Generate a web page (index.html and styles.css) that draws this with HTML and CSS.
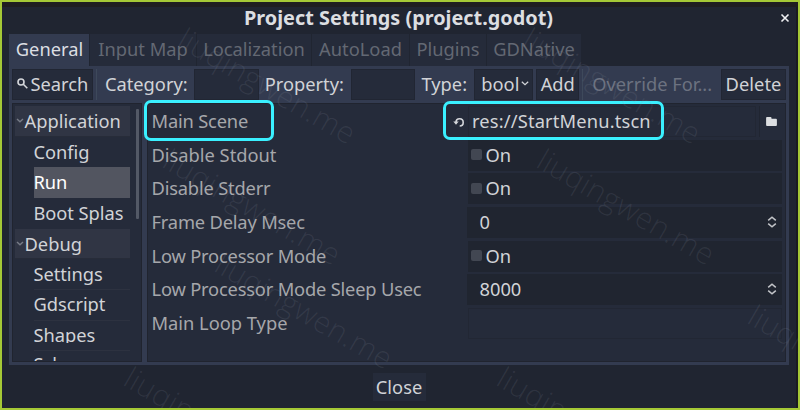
FILE: index.html
```html
<!DOCTYPE html>
<html lang="en">
<head>
<meta charset="utf-8">
<title>Project Settings</title>
<link rel="stylesheet" href="styles.css">
</head>
<body>
<div class="window">
  <header class="title"><h1>Project Settings (project.godot)</h1>
    <svg class="close-x" viewBox="0 0 10 10"><path d="M1.5 1.5l7 7m0-7l-7 7"/></svg>
  </header>
  <nav class="tabs">
    <div class="tab active t1">General</div><div class="tab t2">Input Map</div><div class="tab t3">Localization</div><div class="tab t4">AutoLoad</div><div class="tab t5">Plugins</div><div class="tab t6">GDNative</div>
  </nav>
  <main class="panel">
    <div class="toolbar">
      <div class="btn search"><svg viewBox="0 0 11 11"><circle cx="4" cy="4" r="3"/><path d="M6.3 6.3l4 4"/></svg><span>Search</span></div>
      <i class="sep s1"></i>
      <label class="category">Category:</label><div class="btn input"></div>
      <label class="property">Property:</label><div class="btn input"></div>
      <label class="type">Type:</label>
      <div class="btn bool"><span>bool</span><svg viewBox="0 0 8 5"><path d="M.8.8l3.2 3 3.2-3"/></svg></div>
      <div class="btn add">Add</div>
      <i class="sep s2"></i>
      <span class="override">Override For...</span>
      <div class="btn delete">Delete</div>
    </div>
    <div class="body">
      <aside class="tree">
        <div class="items">
          <div class="group"><svg viewBox="0 0 8 5"><path d="M1 1l3 2.8 3-2.8"/></svg>Application</div>
          <div class="item">Config</div>
          <div class="item selected">Run</div>
          <div class="item">Boot Splas</div>
          <div class="group"><svg viewBox="0 0 8 5"><path d="M1 1l3 2.8 3-2.8"/></svg>Debug</div>
          <div class="item line">Settings</div>
          <div class="item line">Gdscript</div>
          <div class="item line clip"><span>Shapes</span></div>
          <div class="item last">Sch</div>
        </div>
        <div class="scroll"></div>
      </aside>
      <section class="props">
        <div class="prop path"><span class="name">Main Scene</span>
          <svg class="reset" viewBox="0 0 12 12"><path d="M3 6.2A3.6 3.6 0 1 1 6.7 10"/><path class="fill" d="M.3 5.5h5.4L3 8.7z"/></svg>
          <div class="value">res://StartMenu.tscn</div>
          <div class="folder"><svg viewBox="0 0 12 10"><path d="M0 1q0-1 1-1h4q1 0 1 1v1h5q1 0 1 1v6q0 1-1 1H1q-1 0-1-1z"/></svg></div>
        </div>
        <div class="prop"><span class="name loose">Disable Stdout</span><div class="field"><i class="check"></i>On</div></div>
        <div class="prop"><span class="name">Disable Stderr</span><div class="field"><i class="check"></i>On</div></div>
        <div class="prop"><span class="name">Frame Delay Msec</span><div class="field num">0<svg viewBox="0 0 10 12"><path d="M1.2 4.4L5 1.2l3.8 3.2M1.2 7.6L5 10.8l3.8-3.2"/></svg></div></div>
        <div class="prop"><span class="name">Low Processor Mode</span><div class="field"><i class="check"></i>On</div></div>
        <div class="prop"><span class="name">Low Processor Mode Sleep Usec</span><div class="field num">8000<svg viewBox="0 0 10 12"><path d="M1.2 4.4L5 1.2l3.8 3.2M1.2 7.6L5 10.8l3.8-3.2"/></svg></div></div>
        <div class="prop"><span class="name loose">Main Loop Type</span><div class="field empty"></div></div>
      </section>
    </div>
  </main>
  <footer><div class="close">Close</div></footer>
  <div class="mark m1"></div>
  <div class="mark m2"></div>
  <span class="wm w1">liuqingwen.me</span>
  <span class="wm w2">liuqingwen.me</span>
  <span class="wm w3">liuqingwen.me</span>
  <span class="wm w4">liuqingwen.me</span>
  <span class="wm w5">liuqingwen.me</span>
  <span class="wm w6">liuqingwen.me</span>
  <span class="wm w7">liuqingwen.me</span>
  <span class="wm w8">liuqingwen.me</span>
</div>
</body>
</html>
```
FILE: styles.css
```css
* { box-sizing: border-box; }
body { margin: 0; }
.window {
  position: relative; width: 800px; height: 410px; overflow: hidden;
  border: 2px solid #a5c936; padding: 6px 3px 0 0;
  background: linear-gradient(#1f1e20 0 5px, transparent 5px), linear-gradient(to left, #1b1c20 0 2px, #202531 2px);
  font: 18.3px/24px "Noto Sans", sans-serif; color: #d1d3d7; white-space: nowrap;
}
svg { display: block; fill: none; stroke: #d5d7db; stroke-width: 1.6; flex: none; }
.title { height: 26px; margin-left: 7px; display: flex; align-items: center; position: relative; }
h1 { margin: 0 0 6px 235px; font-size: 19.85px; line-height: 24px; font-weight: 700; color: #dcdee1; }
.close-x { width: 10px; height: 10px; margin: 0 5px 7px auto; stroke: #f0f1f3; }
.tabs { display: flex; height: 32px; margin-left: 7px; }
.tab { height: 32px; padding-top: 3px; text-align: center; color: #636873; background: #252b3a; border-right: 1px solid #202531; }
.tab.active { background: #333b50; color: #dcdee3; padding-left: 1px; }
.t1 { width: 81px; } .t2 { width: 107px; } .t3 { width: 115px; } .t4 { width: 98px; } .t5 { width: 77px; } .t6 { width: 95px; }
.panel { width: 780px; height: 299px; margin-left: 7px; padding: 3px; background: #333b50; }
.toolbar { display: flex; height: 31px; align-items: center; line-height: 26px; }
.toolbar > label, .toolbar > span { margin-bottom: 2px; }
.btn { height: 31px; background: #252b3a; border: 1px solid #212633; display: flex; align-items: center; justify-content: center; padding-bottom: 2px; }
.search { width: 81px; gap: 3px; }
.search svg { width: 11px; height: 11px; }
.sep { width: 1px; height: 31px; background: #3e495b; }
.s1 { margin: 0 8px 0 3px; }
.input { width: 65px; }
.category { width: 89px; } .property { width: 86px; margin-left: 6px; } .type { width: 53px; margin-left: 6px; }
.bool { width: 59px; gap: 2px; padding-left: 3px; }
.bool svg { width: 8px; height: 5px; stroke-width: 1.2; }
.add { width: 43px; margin-left: 3px; }
.s2 { margin: 0 9px 0 3px; }
.override { width: 129px; color: #6c7280; }
.delete { width: 65px; letter-spacing: .05px; }
.body { display: flex; gap: 5px; margin-top: 3px; height: 259px; }
.tree { width: 131px; background: #252b3a; border: 1px solid #20242f; padding: 2px; display: flex; gap: 6px; overflow: hidden; }
.items { width: 115px; }
.group, .item { height: 30.7px; display: flex; align-items: center; }
.group { background: #303544; border-bottom: 1px solid #272c39; gap: 1px; padding-left: .5px; }
.group svg { width: 8px; height: 5px; stroke: #777c87; stroke-width: 1.4; }
.item { margin-left: 19px; letter-spacing: -.05px; text-indent: -.5px; padding-bottom: 1px; }
.item.selected { background: #525560; color: #fff; }
.item.line { border-bottom: 1px solid #2d3240; }
.item.clip { height: 29.7px; align-items: flex-start; padding-top: 2px; }
.item.clip span { height: 20px; overflow: hidden; }
.item.last { align-items: flex-start; padding-top: 1px; }
.scroll { width: 3px; height: 110px; margin-top: 3px; background: #535966; border-radius: 1px; }
.props { width: 639px; background: #252b3a; border: 1px solid #20242f; padding: 2px 3px 0 3px; }
.prop { height: 31px; margin-bottom: 2.65px; display: flex; align-items: center; }
.name { width: 316px; color: #a5a7ab; letter-spacing: -.18px; padding: 0 0 1px .5px; }
.name.loose { letter-spacing: 0; }
.field { width: 315px; height: 31px; background: #202530; display: flex; align-items: center; padding: 0 0 1px 3px; margin-left: 1px; }
.check { width: 11px; height: 11px; border-radius: 2px; background: #424752; margin-right: 4px; }
.num { padding: 0 5px 1px 12px; justify-content: space-between; }
.num svg { width: 10px; height: 12px; stroke: #c2c4c8; stroke-width: 1.5; }
.empty { background: #252b3a; border: 1px solid #222734; }
.path .name { width: 303px; }
.reset { width: 12px; height: 12px; margin-right: 3px; }
.reset .fill { fill: #d5d7db; stroke: none; }
.value { width: 290px; height: 31px; border: 1px solid #222734; padding: 2px 0 0 3.5px; letter-spacing: .16px; }
.folder { width: 23px; height: 31px; margin-left: 3px; border-left: 1px solid #202531; display: flex; align-items: center; justify-content: center; }
.folder svg { width: 11px; height: 9px; fill: #dcdee1; stroke: none; }
footer { display: flex; justify-content: center; padding-top: 8px; }
.close { width: 53px; height: 28px; margin-left: 1px; line-height: 28px; background: #252b3a; text-align: center; }
.mark { position: absolute; border: 3px solid #3af0ff; border-radius: 7px; }
.m1 { left: 142px; top: 98px; width: 130px; height: 41px; }
.m2 { left: 441px; top: 99px; width: 221px; height: 39px; }
.wm { position: absolute; font: 300 30px/34px "Open Sans", "Noto Sans", sans-serif; letter-spacing: .3px; color: rgba(150,156,170,.13); transform: rotate(30deg); transform-origin: 0 50%; }
.w1 { left: 179px; top: 17px; } .w2 { left: 524px; top: 17px; } .w3 { left: 164px; top: 138px; } .w4 { left: 538px; top: 138px; }
.w5 { left: 216px; top: 242px; } .w6 { left: 749px; top: 294px; } .w7 { left: 125px; top: 356px; } .w8 { left: 498px; top: 356px; }
```
